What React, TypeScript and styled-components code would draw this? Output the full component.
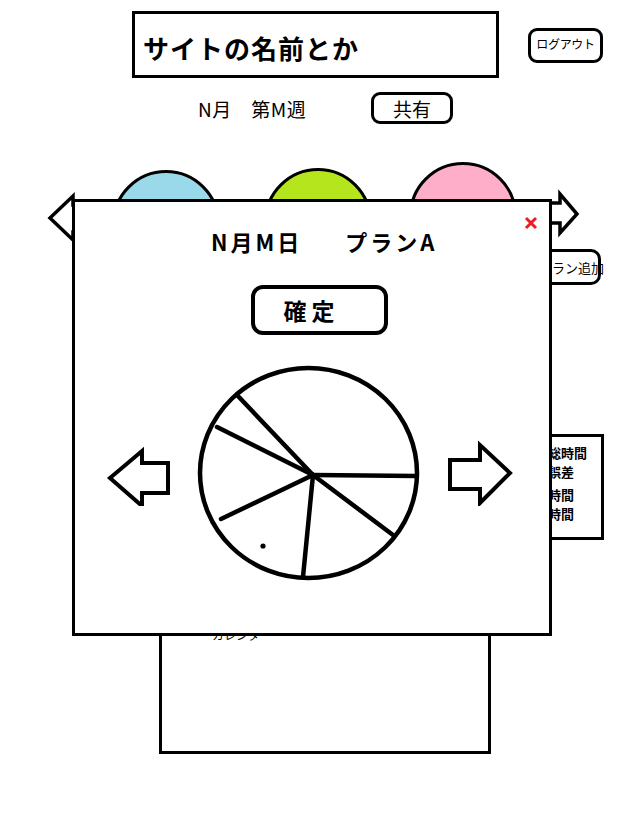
import React from "react";
import styled, { createGlobalStyle } from "styled-components";

const GlobalStyle = createGlobalStyle`
  html, body { margin: 0; padding: 0; background: #fff; }
  body { font-family: "Noto Sans CJK JP", "Noto Sans", sans-serif; color: #000; }
  * { box-sizing: border-box; }
`;

const FONT = `"Noto Sans CJK JP", "Noto Sans", sans-serif`;

const Page = styled.div`
  position: relative;
  width: 634px;
  height: 814px;
  overflow: hidden;
  background: #fff;
`;

const Header = styled.header`
  display: flex;
  align-items: flex-start;
  padding: 11px 0 0 132px;
`;

const TitleBox = styled.div`
  width: 367px;
  height: 67px;
  border: 3px solid #000;
  display: flex;
  align-items: center;
  padding: 5px 0 0 8px;
  font-size: 26px;
  font-weight: 700;
  letter-spacing: 1px;
  white-space: nowrap;
`;

const PillButton = styled.button<{ $w: number; $h: number; $size: number; $bold?: boolean }>`
  width: ${(p) => p.$w}px;
  height: ${(p) => p.$h}px;
  border: 3px solid #000;
  border-radius: 9px;
  background: #fff;
  color: #000;
  font-family: ${FONT};
  font-size: ${(p) => p.$size}px;
  font-weight: ${(p) => (p.$bold ? 700 : 400)};
  display: flex;
  align-items: center;
  justify-content: center;
  padding: 0;
  white-space: nowrap;
  flex-shrink: 0;
`;

const LogoutButton = styled(PillButton)`
  margin: 17px 0 0 29px;
  padding-bottom: 4px;
  letter-spacing: -0.3px;
`;

const WeekRow = styled.div`
  display: flex;
  align-items: center;
  margin-top: 14px;
  height: 32px;
  padding-left: 198px;
`;

const WeekLabel = styled.span`
  width: 173px;
  font-size: 19px;
  letter-spacing: 0.5px;
  white-space: pre;
  padding-top: 1px;
`;

const Carousel = styled.div`
  display: flex;
  align-items: flex-start;
  margin-top: 38px;
  height: 87px;
`;

const NavSvg = styled.svg<{ $ml: number; $mt: number }>`
  display: block;
  flex-shrink: 0;
  margin-left: ${(p) => p.$ml}px;
  margin-top: ${(p) => p.$mt}px;
  overflow: visible;
`;

const PlanCircle = styled.div<{ $color: string; $ml: number; $mt: number }>`
  flex-shrink: 0;
  width: 108px;
  height: 108px;
  border-radius: 50%;
  border: 3px solid #000;
  background: ${(p) => p.$color};
  margin-left: ${(p) => p.$ml}px;
  margin-top: ${(p) => p.$mt}px;
`;

const PlanRow = styled.div`
  display: flex;
  justify-content: flex-end;
  padding-right: 33px;
`;

const PlanAddButton = styled(PillButton)`
  justify-content: flex-start;
  padding-left: 16px;
  border-radius: 10px;
  overflow: visible;
`;

const Main = styled.main`
  display: flex;
  flex-direction: column;
`;

const StatsBox = styled.div`
  align-self: flex-end;
  margin: 149px 30px 0 0;
  width: 94px;
  height: 106px;
  border: 3px solid #000;
  padding: 6px 0 0 9px;
  font-size: 13px;
  font-weight: 700;
  line-height: 19px;
  display: flex;
  flex-direction: column;
  gap: 4px;
  white-space: nowrap;
`;

const StatGroup = styled.div`
  display: flex;
  flex-direction: column;
`;

const CalendarBox = styled.section`
  margin: 70px 0 0 159px;
  width: 332px;
  height: 144px;
  border: 3px solid #000;
  padding: 14px 0 0 50px;
  font-size: 12px;
  line-height: 16px;
`;

const Modal = styled.div`
  position: absolute;
  left: 72px;
  top: 199px;
  width: 480px;
  height: 437px;
  border: 3px solid #000;
  background: #fff;
  display: flex;
  flex-direction: column;
  align-items: flex-start;
`;

const CloseButton = styled.button`
  position: absolute;
  left: 449px;
  top: 14px;
  width: 14px;
  height: 14px;
  padding: 0;
  border: none;
  background: transparent;
  display: block;
`;

const ModalTitle = styled.h2`
  display: flex;
  gap: 43px;
  margin: 24px 0 0;
  padding-left: 136px;
  font-size: 22px;
  font-weight: 700;
  line-height: 30px;
  letter-spacing: 3px;
  white-space: pre;
`;

const ConfirmButton = styled.button`
  margin: 29px 0 0 176px;
  width: 137px;
  height: 50px;
  border: 4px solid #000;
  border-radius: 12px;
  background: #fff;
  color: #000;
  font-family: ${FONT};
  font-size: 23px;
  font-weight: 700;
  letter-spacing: 5px;
  padding: 0 16px 0 0;
  display: flex;
  align-items: center;
  justify-content: center;
`;

const PlanView = styled.div`
  display: flex;
  align-items: center;
  height: 220px;
  margin-top: 27px;
  padding-left: 29px;
`;

const ViewSvg = styled.svg<{ $ml?: number }>`
  display: block;
  flex-shrink: 0;
  margin-left: ${(p) => p.$ml ?? 0}px;
`;

const slices: [number, number][] = [
  [237, 395],
  [217, 427],
  [417, 476],
  [393, 535],
  [303, 577],
  [221, 519],
];

export default function App() {
  return (
    <Page>
      <GlobalStyle />
      <Header>
        <TitleBox>サイトの名前とか</TitleBox>
        <LogoutButton $w={75} $h={35} $size={12}>ログアウト</LogoutButton>
      </Header>

      <WeekRow>
        <WeekLabel>N月　第M週</WeekLabel>
        <PillButton $w={82} $h={32} $size={19}>共有</PillButton>
      </WeekRow>

      <Carousel>
        <NavSvg $ml={46} $mt={28} width={64} height={56} viewBox="46 190 64 56">
          <path
            d="M73,205 L73,196 L50,218 L73,240 L73,232 L108,232 L108,205 Z"
            fill="#fff"
            stroke="#000"
            strokeWidth={3.5}
          />
        </NavSvg>
        <PlanCircle $color="#99d9ea" $ml={2} $mt={8} />
        <PlanCircle $color="#b5e61d" $ml={44} $mt={6} />
        <PlanCircle $color="#ffaec9" $ml={37} $mt={0} />
        <NavSvg $ml={11} $mt={26} width={56} height={50} viewBox="528 188 56 50">
          <path
            d="M530,203 L560,203 L560,194 L577,214 L560,233 L560,223 L530,223 Z"
            fill="#fff"
            stroke="#000"
            strokeWidth={3.5}
          />
        </NavSvg>
      </Carousel>

      <PlanRow>
        <PlanAddButton $w={81} $h={36} $size={13}>プラン追加</PlanAddButton>
      </PlanRow>

      <Main>
        <StatsBox>
          <StatGroup>
            <span>予定総時間</span>
            <span>予測誤差</span>
          </StatGroup>
          <StatGroup>
            <span>活動時間</span>
            <span>休憩時間</span>
          </StatGroup>
        </StatsBox>
        <CalendarBox>カレンダー</CalendarBox>
      </Main>

      <Modal>
        <CloseButton aria-label="閉じる">
          <svg width={14} height={14} viewBox="0 0 14 14">
            <path d="M2,2 L12,12 M12,2 L2,12" stroke="#ed1c24" strokeWidth={3} />
          </svg>
        </CloseButton>
        <ModalTitle>
          <span>N月M日</span>
          <span>プランA</span>
        </ModalTitle>
        <ConfirmButton>確定</ConfirmButton>
        <PlanView>
          <ViewSvg width={70} height={68} viewBox="104 438 70 68">
            <path
              d="M110,478 L142,451 L142,463 L168,463 L168,493 L142,493 L142,506 Z"
              fill="#fff"
              stroke="#000"
              strokeWidth={4}
            />
          </ViewSvg>
          <ViewSvg $ml={20} width={230} height={220} viewBox="194 362 230 220">
            <ellipse cx={308.5} cy={473} rx={108.5} ry={105} fill="#fff" stroke="#000" strokeWidth={4.5} />
            {slices.map(([x, y], i) => (
              <line key={i} x1={313} y1={475} x2={x} y2={y} stroke="#000" strokeWidth={4.5} strokeLinecap="round" />
            ))}
            <circle cx={263} cy={546} r={2.6} fill="#000" />
          </ViewSvg>
          <ViewSvg $ml={20} width={70} height={68} viewBox="444 438 70 68">
            <path
              d="M450,460 L480,460 L480,445 L510,473 L480,503 L480,489 L450,489 Z"
              fill="#fff"
              stroke="#000"
              strokeWidth={4}
            />
          </ViewSvg>
        </PlanView>
      </Modal>
    </Page>
  );
}
